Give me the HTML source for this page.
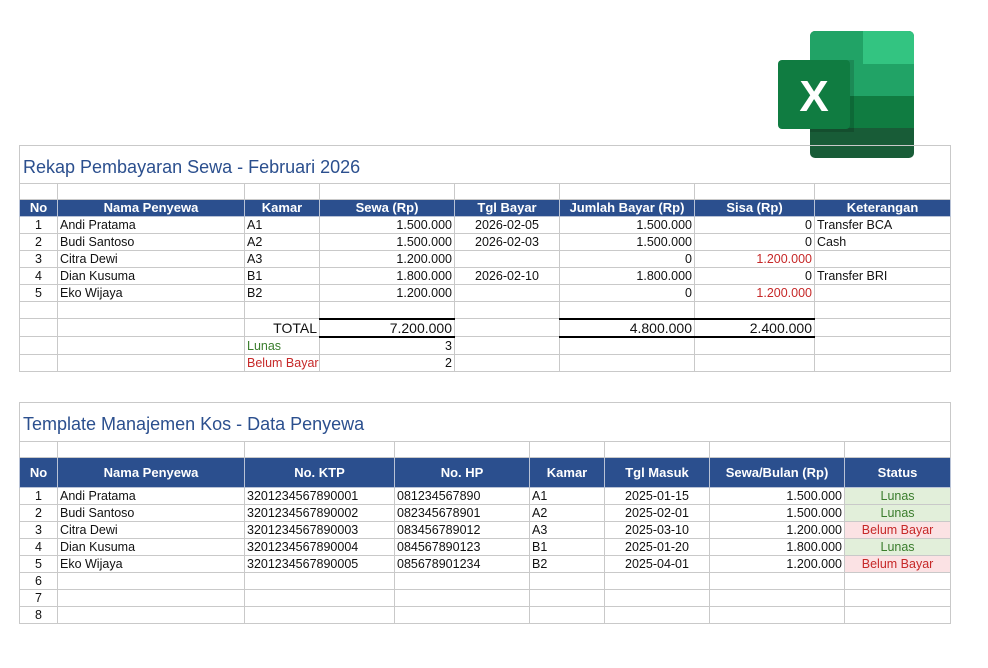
<!DOCTYPE html>
<html><head><meta charset="utf-8"><style>
body{margin:0;width:988px;height:668px;background:#fff;position:relative;font-family:"Liberation Sans",sans-serif;overflow:hidden}
table{position:absolute;border-collapse:collapse;table-layout:fixed;font-size:12.5px;color:#111}
td{border:1px solid #c9c9c9;padding:0 2px;white-space:nowrap;overflow:hidden;line-height:14px}
.t td.title{font-size:18px;color:#2b4f8e;padding:4px 3px 0;vertical-align:middle;border-right:1px solid #c9c9c9}
.h td{background:#2b4f8e;color:#fff;font-weight:bold;text-align:center;border-color:#b8c2d6;font-size:13px}
.c{text-align:center}.r{text-align:right}
.g{color:#3a7d2c}.red{color:#c62828}
.lg{background:#e2efda;color:#3a7d2c;text-align:center}
.lr{background:#fbe2e4;color:#c62828;text-align:center}
.tt{border-top:2px solid #000!important}
.tb{border-bottom:2px solid #000!important}
</style></head><body>

<svg style="position:absolute;left:776px;top:30px" width="140" height="130" viewBox="776 30 140 130">
<defs><clipPath id="cb"><rect x="810" y="31" width="104" height="127" rx="5"/></clipPath></defs>
<g clip-path="url(#cb)">
<rect x="810" y="31" width="104" height="127" fill="#185c37"/>
<rect x="810" y="31" width="53" height="33" fill="#21a366"/>
<rect x="863" y="31" width="51" height="33" fill="#33c481"/>
<rect x="810" y="64" width="104" height="32" fill="#21a366"/>
<rect x="810" y="96" width="104" height="32" fill="#107c41"/>
<rect x="810" y="60" width="44" height="72" fill="#000" opacity="0.15"/>
</g>
<rect x="778" y="60" width="72" height="69" rx="4" fill="#107c41"/>
<text x="814" y="111" font-family="Liberation Sans" font-weight="bold" font-size="44" fill="#fff" text-anchor="middle">X</text>
</svg>

<table class="t" style="left:19px;top:145px;width:931px">
<colgroup><col style="width:38px"><col style="width:187px"><col style="width:75px"><col style="width:135px"><col style="width:105px"><col style="width:135px"><col style="width:120px"><col style="width:136px"></colgroup>
<tr style="height:38px"><td colspan="8" class="title">Rekap Pembayaran Sewa - Februari 2026</td></tr>
<tr style="height:16px"><td></td><td></td><td></td><td></td><td></td><td></td><td></td><td></td></tr>
<tr class="h" style="height:17px"><td>No</td><td>Nama Penyewa</td><td>Kamar</td><td>Sewa (Rp)</td><td>Tgl Bayar</td><td>Jumlah Bayar (Rp)</td><td>Sisa (Rp)</td><td>Keterangan</td></tr>
<tr style="height:17px"><td class="c">1</td><td>Andi Pratama</td><td>A1</td><td class="r">1.500.000</td><td class="c">2026-02-05</td><td class="r">1.500.000</td><td class="r">0</td><td>Transfer BCA</td></tr>
<tr style="height:17px"><td class="c">2</td><td>Budi Santoso</td><td>A2</td><td class="r">1.500.000</td><td class="c">2026-02-03</td><td class="r">1.500.000</td><td class="r">0</td><td>Cash</td></tr>
<tr style="height:17px"><td class="c">3</td><td>Citra Dewi</td><td>A3</td><td class="r">1.200.000</td><td></td><td class="r">0</td><td class="r red">1.200.000</td><td></td></tr>
<tr style="height:17px"><td class="c">4</td><td>Dian Kusuma</td><td>B1</td><td class="r">1.800.000</td><td class="c">2026-02-10</td><td class="r">1.800.000</td><td class="r">0</td><td>Transfer BRI</td></tr>
<tr style="height:17px"><td class="c">5</td><td>Eko Wijaya</td><td>B2</td><td class="r">1.200.000</td><td></td><td class="r">0</td><td class="r red">1.200.000</td><td></td></tr>
<tr style="height:17px"><td></td><td></td><td></td><td></td><td></td><td></td><td></td><td></td></tr>
<tr style="height:18px;font-size:14px"><td></td><td></td><td class="r">TOTAL</td><td class="r tt tb">7.200.000</td><td></td><td class="r tt tb">4.800.000</td><td class="r tt tb">2.400.000</td><td></td></tr>
<tr style="height:18px"><td></td><td></td><td class="g">Lunas</td><td class="r">3</td><td></td><td></td><td></td><td></td></tr>
<tr style="height:17px"><td></td><td></td><td class="red" style="padding:0 0 0 2px">Belum Bayar</td><td class="r">2</td><td></td><td></td><td></td><td></td></tr>
</table>

<table class="t" style="left:19px;top:402px;width:931px">
<colgroup><col style="width:38px"><col style="width:187px"><col style="width:150px"><col style="width:135px"><col style="width:75px"><col style="width:105px"><col style="width:135px"><col style="width:106px"></colgroup>
<tr style="height:39px"><td colspan="8" class="title">Template Manajemen Kos - Data Penyewa</td></tr>
<tr style="height:16px"><td></td><td></td><td></td><td></td><td></td><td></td><td></td><td></td></tr>
<tr class="h" style="height:30px"><td>No</td><td>Nama Penyewa</td><td>No. KTP</td><td>No. HP</td><td>Kamar</td><td>Tgl Masuk</td><td>Sewa/Bulan (Rp)</td><td>Status</td></tr>
<tr style="height:17px"><td class="c">1</td><td>Andi Pratama</td><td>3201234567890001</td><td>081234567890</td><td>A1</td><td class="c">2025-01-15</td><td class="r">1.500.000</td><td class="lg">Lunas</td></tr>
<tr style="height:17px"><td class="c">2</td><td>Budi Santoso</td><td>3201234567890002</td><td>082345678901</td><td>A2</td><td class="c">2025-02-01</td><td class="r">1.500.000</td><td class="lg">Lunas</td></tr>
<tr style="height:17px"><td class="c">3</td><td>Citra Dewi</td><td>3201234567890003</td><td>083456789012</td><td>A3</td><td class="c">2025-03-10</td><td class="r">1.200.000</td><td class="lr">Belum Bayar</td></tr>
<tr style="height:17px"><td class="c">4</td><td>Dian Kusuma</td><td>3201234567890004</td><td>084567890123</td><td>B1</td><td class="c">2025-01-20</td><td class="r">1.800.000</td><td class="lg">Lunas</td></tr>
<tr style="height:17px"><td class="c">5</td><td>Eko Wijaya</td><td>3201234567890005</td><td>085678901234</td><td>B2</td><td class="c">2025-04-01</td><td class="r">1.200.000</td><td class="lr">Belum Bayar</td></tr>
<tr style="height:17px"><td class="c">6</td><td></td><td></td><td></td><td></td><td></td><td></td><td></td></tr>
<tr style="height:17px"><td class="c">7</td><td></td><td></td><td></td><td></td><td></td><td></td><td></td></tr>
<tr style="height:17px"><td class="c">8</td><td></td><td></td><td></td><td></td><td></td><td></td><td></td></tr>
</table>
</body></html>
